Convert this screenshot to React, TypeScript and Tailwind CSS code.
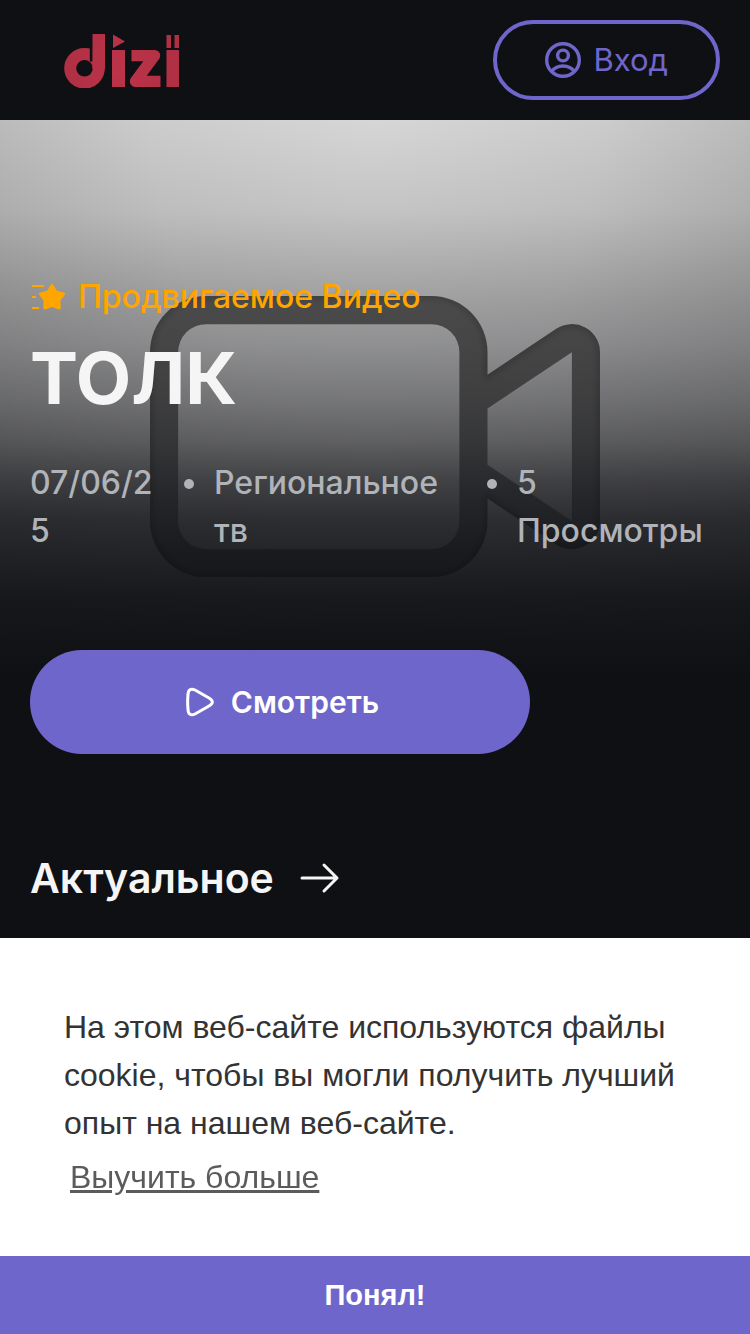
import React from "react";

interface MetaItemProps {
  children: React.ReactNode;
}

function Logo() {
  return (
    <svg viewBox="0 -2 116 56" className="w-[116px] h-14" role="img" aria-label="dizi">
      <defs>
        <radialGradient id="logo-red" gradientUnits="userSpaceOnUse" cx="58" cy="32" r="62">
          <stop offset="0" stopColor="#bd3449" />
          <stop offset="1" stopColor="#ae2f43" />
        </radialGradient>
      </defs>
      <circle cx="20.5" cy="34.3" r="14.3" fill="none" stroke="url(#logo-red)" strokeWidth="12" />
      <rect x="25.8" y="12" width="3" height="15.5" fill="#0f1014" />
      <rect x="28.5" y="0" width="12.5" height="35" fill="url(#logo-red)" />
      <rect x="48" y="16" width="13" height="37" fill="url(#logo-red)" />
      <polygon points="49,0.5 61,7.5 49,14" fill="url(#logo-red)" />
      <polyline points="67.5,21.6 90.5,21.6 71.5,47.4 96.5,47.4" fill="none" stroke="url(#logo-red)" strokeWidth="11.4" strokeLinejoin="round" />
      <rect x="102.5" y="16" width="12.5" height="37" fill="url(#logo-red)" />
      <rect x="102.5" y="1" width="4.5" height="13" fill="url(#logo-red)" />
      <rect x="110.5" y="1" width="4.5" height="13" fill="url(#logo-red)" />
    </svg>
  );
}

function UserIcon() {
  return (
    <svg viewBox="1 1 36 36" className="h-9 w-9" fill="none" stroke="currentColor" strokeWidth="3.4" aria-hidden="true">
      <circle cx="19" cy="19" r="16.3" />
      <circle cx="19" cy="14.5" r="5.4" />
      <path d="M7.5 30.800C10 27 14.200 25 19 25s9 2 11.500 5.800" />
    </svg>
  );
}

function PromotedIcon() {
  return (
    <svg viewBox="0 0 36 30" className="w-9 h-[30px]" aria-hidden="true">
      <path d="M2 4h12M2 15h4M2 26h7" stroke="currentColor" strokeWidth="2" />
      <polygon
        points="22,3.5 25.900,10 33.5,12 28.900,18 29.2,26 22,23.4 14.8,26 15.1,18 10.5,12 18.100,10"
        fill="currentColor"
        stroke="currentColor"
        strokeWidth="3"
        strokeLinejoin="round"
      />
    </svg>
  );
}

function CameraBackdrop() {
  return (
    <svg viewBox="0 0 16 10" className="absolute top-44 left-[20%] w-3/5" aria-hidden="true">
      <defs>
        <linearGradient id="camera-fill" x1="0" y1="0" x2="0" y2="10" gradientUnits="userSpaceOnUse">
          <stop offset="0" stopColor="#4b4b4c" />
          <stop offset="0.35" stopColor="#3f3f40" />
          <stop offset="0.52" stopColor="#353638" />
          <stop offset="0.7" stopColor="#26272a" />
          <stop offset="0.9" stopColor="#1a1b1e" />
          <stop offset="1" stopColor="#17181b" />
        </linearGradient>
        <clipPath id="camera-shape">
          <path
            clipRule="evenodd"
            d="M2 0H10A2 2 0 0 1 12 2V8A2 2 0 0 1 10 10H2A2 2 0 0 1 0 8V2A2 2 0 0 1 2 0ZM2 1A1 1 0 0 0 1 2V8A1 1 0 0 0 2 9H10A1 1 0 0 0 11 8V2A1 1 0 0 0 10 1ZM12 2.8L14.445 1.168A1 1 0 0 1 16 2V8A1 1 0 0 1 14.445 8.832L12 7.2V6L15 8V2L12 4Z"
          />
        </clipPath>
        <filter id="camera-soften">
          <feGaussianBlur stdDeviation="0.12" />
        </filter>
      </defs>
      <g clipPath="url(#camera-shape)">
        <rect width="16" height="10" fill="url(#camera-fill)" />
        {/* soft inner edge along the outline */}
        <path
          d="M2 0H10A2 2 0 0 1 12 2V2.8L14.445 1.168A1 1 0 0 1 16 2V8A1 1 0 0 1 14.445 8.832L12 7.2V8A2 2 0 0 1 10 10H2A2 2 0 0 1 0 8V2A2 2 0 0 1 2 0Z"
          fill="none"
          stroke="#000"
          strokeOpacity="0.2"
          strokeWidth="0.2"
          filter="url(#camera-soften)"
        />
      </g>
    </svg>
  );
}

function MetaItem({ children }: MetaItemProps) {
  return (
    <li className="flex items-start gap-5">
      <span className="mt-5 h-[10px] w-[10px] shrink-0 rounded-full bg-[#b0b3b8]" />
      {children}
    </li>
  );
}

export default function App() {
  return (
    <div className="flex min-h-screen flex-col bg-[#0f1014] font-['Inter',sans-serif] text-[#f5f5f5]">
      <header className="flex h-[120px] items-center justify-between pr-[30px] pl-16">
        <a href="#home">
          <Logo />
        </a>
        <a
          href="#login"
          className="flex h-20 items-center gap-3 rounded-full border-4 border-[#6f66cb] px-12 text-[31px] text-[#6f66cb]"
        >
          <UserIcon />
          Вход
        </a>
      </header>

      <main>
        <section className="relative px-[30px] pt-[152px]">
          {/* Poster background */}
          <div className="absolute inset-x-0 top-0 h-[562px] overflow-hidden bg-[radial-gradient(ellipse_75%_130%_at_50%_0%,#d6d6d6_0%,#cccccc_40%,#a6a6a6_100%)]">
            <div className="absolute inset-0 bg-[linear-gradient(to_bottom,rgb(15_16_20/0)_0%,rgb(15_16_20/0.08)_16%,rgb(15_16_20/0.25)_32%,rgb(15_16_20/0.33)_40%,rgb(15_16_20/0.46)_50%,rgb(15_16_20/0.57)_57%,rgb(15_16_20/0.72)_64%,rgb(15_16_20/0.83)_71%,rgb(15_16_20/0.89)_78%,rgb(15_16_20/0.95)_85%,rgb(15_16_20/0.98)_93%,rgb(15_16_20)_100%)]" />
            <CameraBackdrop />
          </div>

          <div className="relative">
            <p className="flex items-center gap-3 text-[32px] leading-[50px] font-medium text-[#ffa500]">
              <PromotedIcon />
              Продвигаемое Видео
            </p>
            <h1 className="mt-3 text-[72px] leading-[88px] font-bold">ТОЛК</h1>
            <ul className="mt-[37px] flex text-[32px] leading-[48px] font-medium text-[#b0b3b8]">
              <li className="w-[154px] shrink-0 pr-6 break-all">07/06/25</li>
              <MetaItem>
                <a href="#regional" className="w-[273px] pr-10">Региональное тв</a>
              </MetaItem>
              <MetaItem>
                <span>5 Просмотры</span>
              </MetaItem>
            </ul>
            <button className="mt-[95px] flex h-[104px] w-[500px] max-w-full items-center justify-center gap-4 rounded-full bg-[#6f66cb] pl-1 text-[30px] font-semibold text-white">
              <svg viewBox="0 0 30 30" className="h-[30px] w-[30px]" fill="none" stroke="currentColor" strokeWidth="3" strokeLinejoin="round" aria-hidden="true">
                <path d="M3 8C3 2.5 6 1 10 3L24 11C28.5 13.700 28.500 16.300 24 19L10 27C6 29 3 27.500 3 22C2.500 17 2.500 13 3 8Z" />
              </svg>
              Смотреть
            </button>
          </div>
        </section>

        <section className="px-[30px] pt-24 pb-8">
          <h2>
            <a href="#trending" className="flex items-center gap-6 text-[41px] leading-[56px] font-semibold">
              Актуальное
              <svg viewBox="0 0 42 32" className="h-8 w-[42px]" fill="none" stroke="currentColor" strokeWidth="3" strokeLinecap="round" strokeLinejoin="round" aria-hidden="true">
                <path d="M4 16h35M26 3l13 13-13 13" />
              </svg>
            </a>
          </h2>
        </section>
      </main>

      {/* Cookie notice */}
      <aside className="mt-auto bg-white font-['Liberation_Sans',sans-serif] text-[32px] leading-[48px] text-[#333333]">
        <div className="px-16 pt-[65px] pb-[55px]">
          <p>На этом веб-сайте используются файлы cookie, чтобы вы могли получить лучший опыт на нашем веб-сайте.</p>
          <a href="#cookies" className="inline-block px-[6px] pt-[6px] underline opacity-80">Выучить больше</a>
        </div>
        <button className="h-[78px] w-full bg-[#6f66cb] text-[29px] font-bold text-white">Понял!</button>
      </aside>
    </div>
  );
}
